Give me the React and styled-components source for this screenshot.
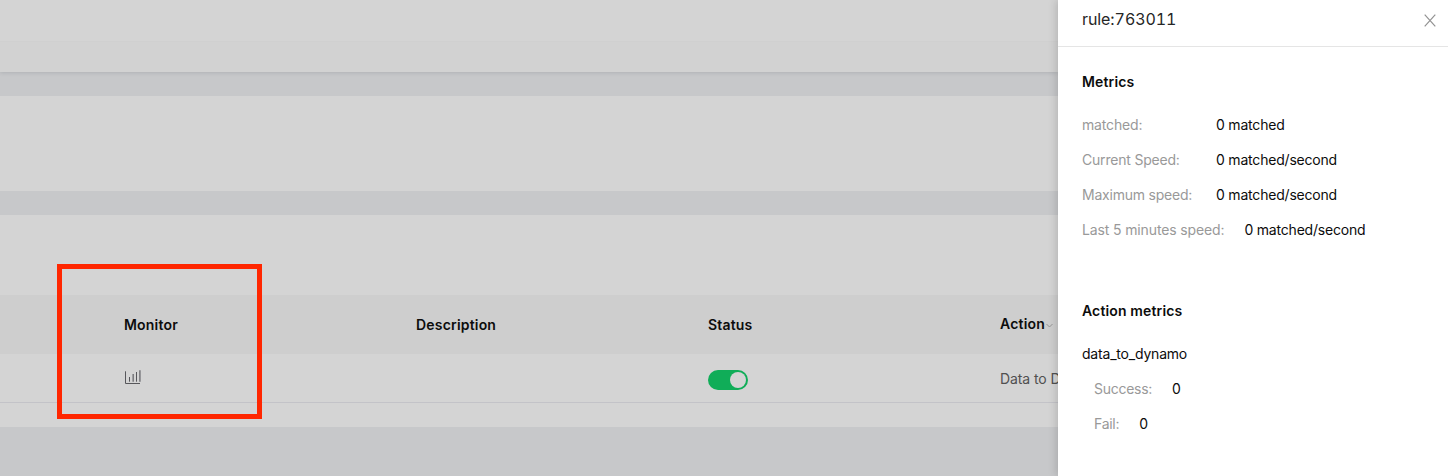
import React from 'react';
import styled, { createGlobalStyle } from 'styled-components';

const GlobalStyle = createGlobalStyle`
  * { box-sizing: border-box; }
  body {
    margin: 0;
    overflow: hidden;
    background: #c7c8ca;
    font: 14px/20px Inter, Roboto, sans-serif;
    color: #0c0c0c;
  }
`;

const Screen = styled.div`
  position: relative;
  display: flex;
  width: 1448px;
  height: 476px;
  overflow: hidden;
`;

const Page = styled.main`
  flex: 0 0 1058px;
  display: flex;
  flex-direction: column;
  gap: 24px;
  overflow: hidden;
`;

const TopBar = styled.header`
  display: flex;
  flex-direction: column;
  justify-content: flex-end;
  flex: none;
  height: 72px;
  background: #d4d4d4;
  box-shadow: 0 1px 4px rgba(0, 21, 41, 0.12);
`;

const SubBar = styled.div`
  height: 31px;
  border-top: 1px solid #d0d0d0;
  background: #d2d2d2;
`;

const Card = styled.section`
  flex: none;
  height: ${(p) => p.$height}px;
  padding-top: ${(p) => p.$top || 0}px;
  background: #d4d4d4;
`;

const Row = styled.div`
  display: grid;
  grid-template-columns: repeat(3, 292px) 1fr;
  align-items: center;
  height: ${(p) => (p.$head ? 59 : 49)}px;
  padding-left: 124px;
  background: ${(p) => (p.$head ? '#cecece' : '#d4d4d4')};
  border-bottom: ${(p) => (p.$head ? 'none' : '1px solid #c3c3c8')};
  font-weight: ${(p) => (p.$head ? 600 : 400)};
  letter-spacing: ${(p) => (p.$head ? 0.19 : -0.1)}px;
  color: ${(p) => (p.$head ? '#0c0c0c' : '#505050')};
`;

const Cell = styled.div`
  display: flex;
  align-items: center;
  min-width: 0;
  white-space: nowrap;
  padding-top: ${(p) => p.$top || 0}px;
  padding-bottom: ${(p) => p.$bottom || 0}px;
`;

const Chevron = styled.svg`
  margin: 2px 0 0 1px;
`;

const Switch = styled.div`
  display: flex;
  justify-content: flex-end;
  width: 40px;
  height: 20px;
  padding: 2px;
  border-radius: 10px;
  background: #10ad58;
`;

const Knob = styled.div`
  width: 16px;
  height: 16px;
  border-radius: 50%;
  background: #d4d4d4;
`;

const Highlight = styled.div`
  position: absolute;
  left: 57px;
  top: 264px;
  width: 205px;
  height: 155px;
  border: 5px solid #ff2600;
`;

const Drawer = styled.aside`
  position: relative;
  flex: 0 0 390px;
  height: 476px;
  background: #fff;
  box-shadow: -2px 0 8px rgba(0, 0, 0, 0.15);
`;

const DrawerHeader = styled.header`
  display: flex;
  justify-content: space-between;
  align-items: center;
  height: 47px;
  padding: 0 12px 8px 24px;
  border-bottom: 1px solid #e5e5e5;
`;

const DrawerTitle = styled.div`
  font-size: 16px;
  line-height: 22px;
  letter-spacing: -0.08px;
  font-variant-numeric: tabular-nums;
  color: #262626;
`;

const CloseIcon = styled.svg`
  margin-top: 2px;
`;

const DrawerBody = styled.div`
  padding: 25px 24px 0;
`;

const Heading = styled.h2`
  margin: ${(p) => p.$top || 0}px 0 15px;
  font-size: 14px;
  line-height: 20px;
  font-weight: 600;
  letter-spacing: 0.14px;
`;

const Metric = styled.div`
  display: flex;
  gap: 20px;
  height: 35px;
  padding-left: ${(p) => (p.$indent ? 12 : 0)}px;
  line-height: 35px;
  letter-spacing: -0.2px;
  white-space: nowrap;
`;

const Label = styled.span`
  min-width: ${(p) => p.$min || 0}px;
  letter-spacing: ${(p) => p.$spacing}px;
  color: #999;
`;

const metrics = [
  ['matched:', '0 matched', -0.16],
  ['Current Speed:', '0 matched/second', -0.2],
  ['Maximum speed:', '0 matched/second', -0.22],
  ['Last 5 minutes speed:', '0 matched/second', -0.13],
];

const results = [
  ['Success:', '0'],
  ['Fail:', '0'],
];

function ChartIcon() {
  return (
    <svg width="18" height="16" viewBox="0 0 18 16" fill="none" stroke="#57575b">
      <path d="M1.5 2.3v12.2H16" />
      <path d="M5.5 8v4.7M12.5 3v9.7" />
      <path d="M9.2 5v7.7M15.9 1.3v11.4" strokeWidth="1.6" stroke="#7c7c80" />
    </svg>
  );
}

export default function App() {
  return (
    <>
      <GlobalStyle />
      <Screen>
        <Page>
          <TopBar>
            <SubBar />
          </TopBar>
          <Card $height={95} />
          <Card $height={212} $top={80}>
            <Row $head>
              <Cell $top={1}>Monitor</Cell>
              <Cell $top={1}>Description</Cell>
              <Cell $top={1}>Status</Cell>
              <Cell $bottom={1}>
                Action
                <Chevron width="7" height="5" viewBox="0 0 7 5" fill="none" stroke="#949494">
                  <path d="M.5 1l3 3 3-3" />
                </Chevron>
              </Cell>
            </Row>
            <Row>
              <Cell $bottom={2}><ChartIcon /></Cell>
              <Cell />
              <Cell $top={3}><Switch><Knob /></Switch></Cell>
              <Cell $top={2}>Data to D</Cell>
            </Row>
          </Card>
        </Page>
        <Drawer>
          <DrawerHeader>
            <DrawerTitle>rule:763011</DrawerTitle>
            <CloseIcon width="12" height="13" viewBox="0 0 12 13" fill="none" stroke="#929292" strokeWidth="1.2">
              <path d="M.7.7l10.6 11.6M11.3.7L.7 12.3" />
            </CloseIcon>
          </DrawerHeader>
          <DrawerBody>
            <Heading>Metrics</Heading>
            {metrics.map(([label, value, spacing]) => (
              <Metric key={label}>
                <Label $min={114} $spacing={spacing}>{label}</Label>
                <span>{value}</span>
              </Metric>
            ))}
            <Heading $top={54}>Action metrics</Heading>
            <Metric>data_to_dynamo</Metric>
            {results.map(([label, value]) => (
              <Metric key={label} $indent>
                <Label $spacing={-0.28}>{label}</Label>
                <span>{value}</span>
              </Metric>
            ))}
          </DrawerBody>
        </Drawer>
        <Highlight />
      </Screen>
    </>
  );
}
